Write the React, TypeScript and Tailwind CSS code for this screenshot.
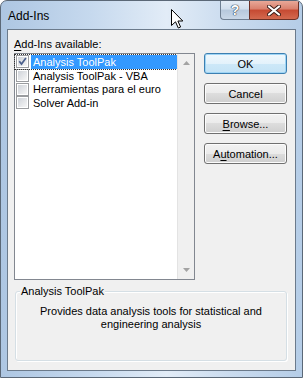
import React from 'react'

const items = [
  { label: 'Analysis ToolPak', checked: true, selected: true },
  { label: 'Analysis ToolPak - VBA', checked: false, selected: false },
  { label: 'Herramientas para el euro', checked: false, selected: false },
  { label: 'Solver Add-in', checked: false, selected: false },
]

function CheckBox({ checked }: { checked: boolean }) {
  return (
    <div className="w-[13px] h-[13px] shrink-0 border border-[#9a9c9f] bg-white p-px">
      <div className="relative w-full h-full bg-[linear-gradient(135deg,#cfd3d9,#f6f6f6)]">
        {checked && (
          <svg viewBox="0 0 9 9" className="absolute inset-0 w-[9px] h-[9px]">
            <path d="M1.3 4.3 L3.5 7 L7.9 1" fill="none" stroke="#4a5f8c" strokeWidth="1.7" />
          </svg>
        )}
      </div>
    </div>
  )
}

function Button({ children, primary }: { children: React.ReactNode; primary?: boolean }) {
  return (
    <div
      className={
        'h-[21px] w-[83px] rounded-[3px] border flex items-center justify-center ' +
        (primary
          ? 'border-[#3c7fb1] shadow-[inset_0_0_0_1px_#9fd5f5] bg-[linear-gradient(#f0f8fd_0%,#e3f2fb_50%,#cde8f8_50%,#c4e3f6_100%)]'
          : 'border-[#707070] shadow-[inset_0_0_0_1px_#fcfcfc] bg-[linear-gradient(#f2f2f2_0%,#ebebeb_50%,#dddddd_50%,#cfcfcf_100%)]')
      }
    >
      {children}
    </div>
  )
}

export default function App() {
  return (
    <div className="relative w-[303px] h-[378px] overflow-hidden rounded-t-[7px] border border-[#5b6877] bg-[linear-gradient(90deg,#adc6e2_0%,#c6d9ee_30%,#e2ecf7_55%,#cbdcef_75%,#b5cde7_100%)] text-[11px] leading-[14px] text-black font-['Liberation_Sans',Arial,sans-serif]">
      {/* title bar */}
      <div className="flex h-[28px]">
        <div className="pl-[7px] pt-[8px] text-[12px]">Add-Ins</div>
        <div className="ml-auto flex pr-[3px] -mt-px">
          <div className="w-[29px] h-[20px] rounded-bl-[4px] border border-[#6e7f92] border-r-0 bg-[linear-gradient(#e3ecf6_0%,#d2dfed_45%,#b6c8dc_50%,#c9d8e8_100%)] flex items-center justify-center">
            <span className="font-bold text-[14px] leading-none text-white [text-shadow:0_0_1px_#2b3a4c,0_0_1px_#2b3a4c,0_0_1px_#2b3a4c]">?</span>
          </div>
          <div className="w-[50px] h-[20px] rounded-br-[4px] border border-[#6b3026] bg-[linear-gradient(#e8a898_0%,#d9806d_45%,#c64a32_50%,#d3694f_100%)] flex items-center justify-center">
            <svg viewBox="0 0 14 11" className="w-[14px] h-[11px]">
              <path d="M2 1.5 L12 9.5 M12 1.5 L2 9.5" stroke="#3b1d18" strokeWidth="4" strokeLinecap="round" />
              <path d="M2 1.5 L12 9.5 M12 1.5 L2 9.5" stroke="#ffffff" strokeWidth="2.2" strokeLinecap="round" />
            </svg>
          </div>
        </div>
      </div>

      {/* client area */}
      <div className="mx-[6px] h-[342px] border border-[#6b7a8b] bg-[#f0f0f0] pt-[7px]">
        <div className="flex pl-[6px]">
          <div className="flex flex-col">
            <div className="h-[16px]">
              <span className="underline underline-offset-2">A</span>dd-Ins available:
            </div>
            <div className="w-[181px] h-[227px] border border-[#828790] bg-white flex">
              <div className="flex-1 pt-px">
                {items.map((it) => (
                  <div
                    key={it.label}
                    className={
                      'flex items-center h-[13.7px] pl-px gap-[2px] ' +
                      (it.selected ? 'outline outline-1 outline-dotted outline-[#333]' : '')
                    }
                  >
                    <CheckBox checked={it.checked} />
                    <div
                      className={
                        'flex-1 h-full flex items-center pl-[2px] whitespace-nowrap ' +
                        (it.selected ? 'bg-[#3399ff] text-white' : '')
                      }
                    >
                      {it.label}
                    </div>
                  </div>
                ))}
              </div>
              <div className="w-[17px] h-full border-l border-[#e3e3e3] bg-[#f0f0f0] flex flex-col justify-between items-center py-[7px]">
                <svg viewBox="0 0 7 4" className="w-[7px] h-[4px]">
                  <path d="M3.5 0 L7 4 L0 4 Z" fill="#a3a3a3" />
                </svg>
                <svg viewBox="0 0 7 4" className="w-[7px] h-[4px]">
                  <path d="M0 0 L7 0 L3.5 4 Z" fill="#a3a3a3" />
                </svg>
              </div>
            </div>
          </div>
          <div className="ml-[9px] pt-[16px] flex flex-col gap-[9px]">
            <Button primary>OK</Button>
            <Button>Cancel</Button>
            <Button>
              <span>
                <span className="underline underline-offset-2">B</span>rowse...
              </span>
            </Button>
            <Button>
              <span>
                A<span className="underline underline-offset-2">u</span>tomation...
              </span>
            </Button>
          </div>
        </div>

        {/* group box */}
        <div className="relative ml-[7px] mt-[11px] w-[272px] h-[70px] rounded-[3px] border border-[#d5dfe5] shadow-[inset_1px_1px_0_#ffffff,1px_1px_0_#ffffff]">
          <div className="absolute left-[4px] -top-[8px] bg-[#f0f0f0] px-px">Analysis ToolPak</div>
          <div className="pt-[13px] px-[6px] text-center leading-[13px]">
            Provides data analysis tools for statistical and
            <br />
            engineering analysis
          </div>
        </div>
      </div>

      {/* mouse pointer */}
      <svg viewBox="0 0 13 20" className="absolute left-[170px] top-[8px] w-[13px] h-[20px]">
        <path d="M0.5 0.5 L0.5 16.5 L4.5 12.8 L7.3 19 L9.6 18 L6.9 12 L11.8 12 Z" fill="#ffffff" stroke="#000000" strokeWidth="1" strokeLinejoin="miter" />
      </svg>
    </div>
  )
}
